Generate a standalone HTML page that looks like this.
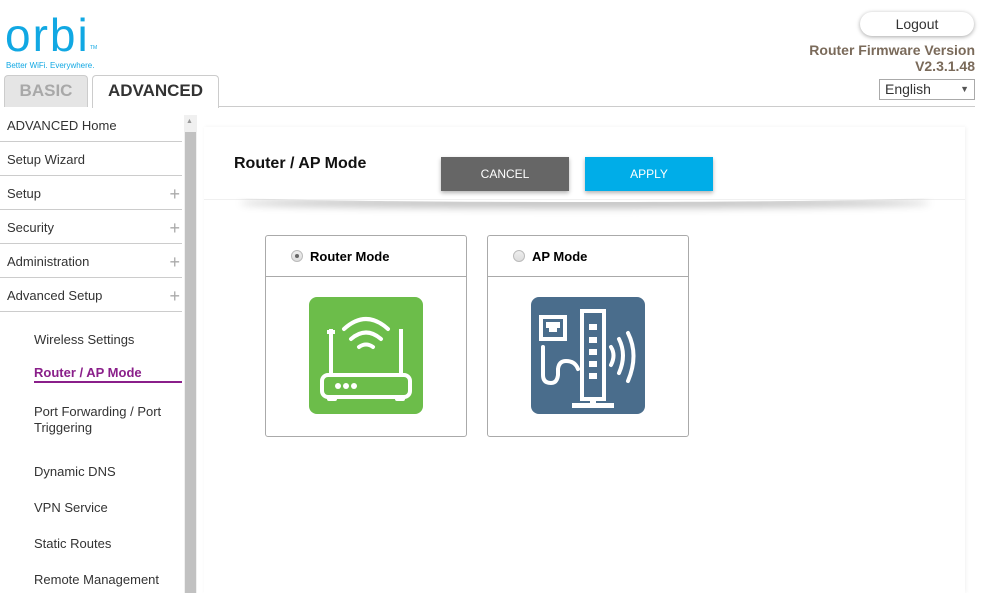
<!DOCTYPE html>
<html><head><meta charset="utf-8"><style>
*{box-sizing:border-box;margin:0;padding:0}
body{width:982px;height:593px;overflow:hidden;background:#fff;font-family:"Liberation Sans",Arial,sans-serif;position:relative}
.a{position:absolute}
.logo{left:5px;top:8px;color:#11a8e3;font-size:46px;letter-spacing:2px;font-weight:normal}
.tag{left:6px;top:61px;color:#11a8e3;font-size:8px}
.tab{top:75px;height:32px;border:1px solid #ccc;border-bottom:none;border-radius:4px 4px 0 0;font-weight:bold;font-size:17px;text-align:center;line-height:30px}
.nav div{position:absolute;left:0;width:182px;font-size:13px;color:#333}
.nav .m{height:34px;line-height:36px;padding-left:7px;border-bottom:1px solid #ccc}
.plus{position:absolute;right:2px;top:0;color:#aaa;font-size:18px;font-weight:300}
.nav .s{left:34px;width:148px;line-height:16px}
.card{top:235px;width:202px;height:202px;border:1px solid #aaa;border-radius:3px}
.card .h{height:41px;border-bottom:1px solid #aaa;font-size:13px;font-weight:bold;line-height:42px;padding-left:44px;position:relative}
.rad{position:absolute;left:25px;top:14px;width:12px;height:12px;border-radius:50%;border:1px solid #bbb;background:linear-gradient(#eee,#ddd)}
</style></head><body>
<div class="a logo">orbi</div><div class="a" style="left:90px;top:45px;font-size:5px;color:#11a8e3">TM</div>
<div class="a tag">Better WiFi. Everywhere.</div>
<div class="a tab" style="left:4px;width:84px;background:#e5e5e5;color:#a8a8a8">BASIC</div>
<div class="a tab" style="left:92px;width:127px;background:#fff;color:#333;height:33px">ADVANCED</div>
<div class="a" style="left:219px;top:106px;width:756px;border-top:1px solid #ccc"></div>
<div class="a" style="left:860px;top:12px;width:114px;height:24px;border-radius:12px;box-shadow:0 1px 4px rgba(0,0,0,.35);text-align:center;line-height:24px;font-size:14px;color:#333">Logout</div>
<div class="a" style="right:7px;top:42px;text-align:right;color:#7a6a5a;font-weight:bold;font-size:14px;line-height:16px">Router Firmware Version<br>V2.3.1.48</div>
<div class="a" style="left:879px;top:79px;width:96px;height:21px;border:1px solid #aaa;font-size:14px;line-height:19px;padding-left:5px;color:#333">English<span style="position:absolute;right:5px;font-size:9px;color:#555">▼</span></div>
<div class="nav">
<div class="m" style="top:108px">ADVANCED Home</div>
<div class="m" style="top:142px">Setup Wizard</div>
<div class="m" style="top:176px">Setup<span class="plus">+</span></div>
<div class="m" style="top:210px">Security<span class="plus">+</span></div>
<div class="m" style="top:244px">Administration<span class="plus">+</span></div>
<div class="m" style="top:278px">Advanced Setup<span class="plus">+</span></div>
<div class="s" style="top:332px">Wireless Settings</div>
<div class="s" style="top:365px;color:#8a1f8a;font-weight:bold;border-bottom:2px solid #8a1f8a;padding-bottom:0;height:18px">Router / AP Mode</div>
<div class="s" style="top:404px">Port Forwarding / Port Triggering</div>
<div class="s" style="top:464px">Dynamic DNS</div>
<div class="s" style="top:500px">VPN Service</div>
<div class="s" style="top:536px">Static Routes</div>
<div class="s" style="top:572px">Remote Management</div>
</div>
<div class="a" style="left:184px;top:115px;width:13px;height:478px;background:#f0f0f0"></div>
<div class="a" style="left:185px;top:132px;width:11px;height:461px;background:#c1c1c1"></div>
<div class="a" style="left:186px;top:118px;font-size:7px;color:#999">▲</div>
<div class="a" style="left:204px;top:127px;width:761px;height:466px;background:#fff;box-shadow:1px 0 4px rgba(0,0,0,.06)"></div>
<div class="a" style="left:204px;top:199px;width:761px;border-top:1px solid #f0f0f0"></div>
<div class="a" style="left:240px;top:192px;width:690px;height:10px;border-radius:50%;box-shadow:0 6px 8px rgba(0,0,0,.25);clip-path:inset(5px -20px -20px -20px)"></div>
<div class="a" style="left:234px;top:155px;font-size:16px;font-weight:bold;color:#111">Router / AP Mode</div>
<div class="a" style="left:441px;top:157px;width:128px;height:34px;background:#666;color:#fff;font-size:12px;text-align:center;line-height:34px;box-shadow:0 2px 4px rgba(0,0,0,.3)">CANCEL</div>
<div class="a" style="left:585px;top:157px;width:128px;height:34px;background:#00ade8;color:#fff;font-size:12px;text-align:center;line-height:34px;box-shadow:0 2px 4px rgba(0,0,0,.3)">APPLY</div>
<div class="a card" style="left:265px"><div class="h"><span class="rad"><span style="position:absolute;left:3px;top:3px;width:4px;height:4px;border-radius:50%;background:#666"></span></span>Router Mode</div>
<svg class="a" style="left:43px;top:61px" width="114" height="117" viewBox="0 0 114 117"><rect width="114" height="117" rx="8" fill="#6cbd4a"/>
<g fill="none" stroke="#fff" stroke-width="4" stroke-linecap="round"><path d="M35 32Q57 12 79 32"/><path d="M42 42Q57 29 72 42"/><path d="M50 50Q57 45 64 50"/>
<rect x="13" y="78" width="88" height="22" rx="6"/></g>
<g fill="#fff"><rect x="20" y="32" width="4" height="46"/><rect x="90" y="32" width="4" height="46"/><rect x="18" y="33" width="8" height="4"/><circle cx="29" cy="89" r="3"/><circle cx="37" cy="89" r="3"/><circle cx="45" cy="89" r="3"/><rect x="18" y="100" width="10" height="4" rx="2"/><rect x="86" y="100" width="10" height="4" rx="2"/></g></svg></div>
<div class="a card" style="left:487px"><div class="h"><span class="rad"></span>AP Mode</div>
<svg class="a" style="left:43px;top:61px" width="114" height="117" viewBox="0 0 114 117"><rect width="114" height="117" rx="8" fill="#4a6d8c"/>
<g fill="none" stroke="#fff" stroke-width="4" stroke-linecap="round"><rect x="10" y="20" width="24" height="22"/><rect x="51" y="14" width="22" height="88"/>
<path d="M12 50V78Q12 86 20 86Q26 86 27 78V72Q28 64 35 64Q44 64 47 72"/><path d="M80 50Q85 58 80 68"/><path d="M88 42Q96 58 88 76"/><path d="M97 36Q108 58 97 84"/></g>
<g fill="#fff"><rect x="15" y="25" width="14" height="6"/><rect x="18" y="31" width="8" height="4"/><rect x="58" y="27" width="8" height="6"/><rect x="58" y="40" width="8" height="6"/><rect x="58" y="52" width="8" height="6"/><rect x="58" y="64" width="8" height="6"/><rect x="58" y="76" width="8" height="6"/><rect x="59" y="102" width="6" height="6"/><rect x="41" y="106" width="42" height="5"/></g></svg></div>
</body></html>
